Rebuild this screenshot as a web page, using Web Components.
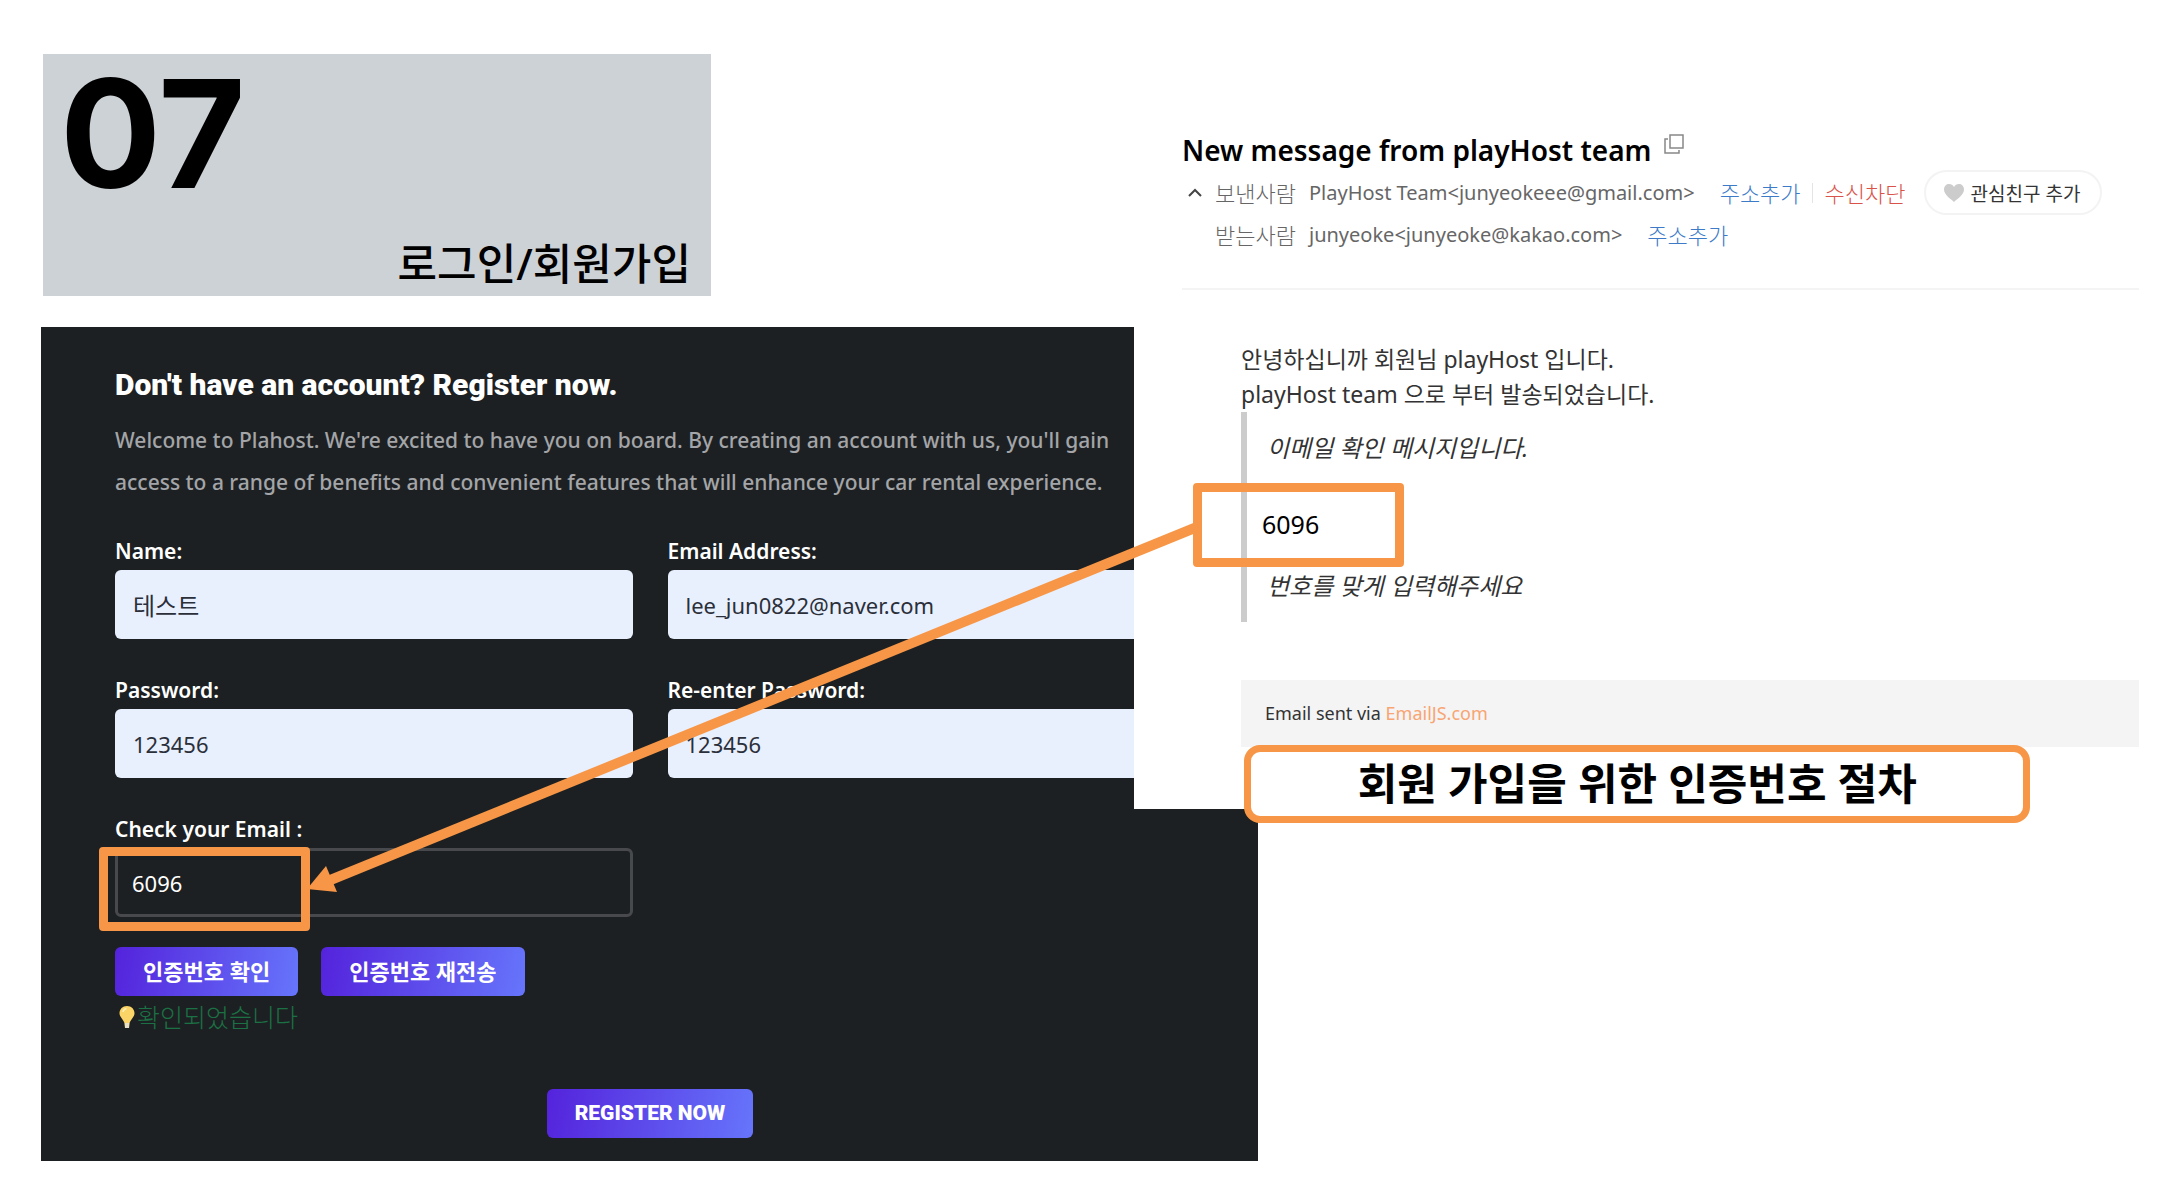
<!DOCTYPE html>
<html lang="ko">
<head>
<meta charset="utf-8">
<title>07 로그인/회원가입</title>
<style>
body {
  margin: 0;
  background: #fff;
  font-family: "Noto Sans", "Noto Sans CJK KR", sans-serif;
}
</style>
</head>
<body>
<slide-page>
  <slide-title slot="title" number="07">로그인/회원가입</slide-title>
  <register-form slot="form"></register-form>
  <mail-message slot="mail" subject="New message from playHost team"></mail-message>
  <slide-caption slot="caption">회원 가입을 위한 인증번호 절차</slide-caption>
</slide-page>

<script>
function define(name, html, setup) {
  const template = document.createElement('template');
  template.innerHTML = html;

  window.customElements.define(name, class extends HTMLElement {
    constructor() {
      super();
      this.attachShadow({ mode: 'open' });
      this.shadowRoot.appendChild(template.content.cloneNode(true));
    }

    connectedCallback() {
      if (setup) setup(this, this.shadowRoot);
    }
  });
}

define('slide-page', `
<style>
:host {
  display: block;
}
main {
  position: relative;
  display: grid;
  grid-template-columns: 1093fr 124fr 881fr;
  row-gap: 31px;
  padding: 54px 44px 25px 41px;
}
::slotted([slot="title"]) {
  grid-area: 1 / 1 / 2 / 2;
}
::slotted([slot="form"]) {
  grid-area: 2 / 1 / 3 / 3;
}
/* the mail lies over the right edge of the form */
::slotted([slot="mail"]) {
  grid-area: 1 / 2 / 3 / 4;
  align-self: start;
  z-index: 1;
}
::slotted([slot="caption"]) {
  position: absolute;
  z-index: 2;
  top: 745px;
  left: 57%;
  right: 7%;
}
svg {
  position: absolute;
  z-index: 2;
  top: 520px;
  left: 14%;
  width: 41%;
  height: 380px;
}
</style>

<main>
  <slot name="title"></slot>
  <slot name="form"></slot>
  <slot name="mail"></slot>
  <slot name="caption"></slot>
  <svg viewBox="306 520 895 380" preserveAspectRatio="none" aria-hidden="true">
    <path d="M1197 527L328 881" stroke="#f79646" stroke-width="10" fill="none"/>
    <path d="M307 889L326 866L337 892Z" fill="#f79646"/>
  </svg>
</main>
`);

define('slide-title', `
<style>
:host {
  display: flex;
  flex-direction: column;
  justify-content: space-between;
  box-sizing: border-box;
  width: 668px;
  min-height: 242px;
  margin-left: 2px;
  padding: 4px 20px 4px 17px;
  background: #cdd2d6;
  color: #000;
}
.number {
  font: 700 150px/152px Inter, sans-serif;
}
h1 {
  margin: 0;
  text-align: right;
  font-size: 43px;
  line-height: 56px;
  font-weight: 500;
}
</style>
<div class="number"></div>
<h1><slot></slot></h1>
`, (el, root) => {
  root.querySelector('.number').innerText = el.getAttribute('number');
});

define('slide-caption', `
<style>
:host {
  box-sizing: border-box;
  display: block;
  height: 78px;
  border: 7px solid #f79646;
  border-radius: 16px;
  background: #fff;
  color: #000;
  text-align: center;
  font-size: 43px;
  line-height: 64px;
  font-weight: 700;
}
</style>
<slot></slot>
`);

define('form-field', `
<style>
:host {
  display: block;
}
label {
  display: block;
  margin-bottom: 3px;
  color: #fff;
  font-size: 21px;
  line-height: 32px;
  font-weight: 600;
}
.box {
  position: relative;
}
input {
  display: block;
  box-sizing: border-box;
  width: 100%;
  height: 69px;
  padding: 0 18px;
  border: 0;
  border-radius: 6px;
  outline: none;
  background: #e8f0fe;
  color: #2b2f3a;
  font-family: inherit;
  font-size: 22px;
}
input:lang(ko) {
  font-size: 24px;
}
:host([outlined]) input {
  padding: 0 14px;
  border: 3px solid #48494c;
  background: transparent;
  color: #fff;
}
:host([outlined]) .box::after {
  content: '';
  position: absolute;
  box-sizing: border-box;
  top: -1px;
  left: -16px;
  width: 211px;
  height: 84px;
  border: 9px solid #f79646;
  border-radius: 4px;
}
</style>
<label for="field"></label>
<div class="box"><input id="field" type="text"></div>
`, (el, root) => {
  root.querySelector('label').innerText = el.getAttribute('label');
  const input = root.querySelector('input');
  input.value = el.getAttribute('value');
  input.lang = /[가-힣]/.test(input.value) ? 'ko' : 'en';
});

define('gradient-button', `
<style>
:host {
  display: block;
}
button {
  display: block;
  height: 49px;
  padding: 0 28px 4px;
  border: 0;
  border-radius: 6px;
  background: linear-gradient(100deg, #5423dc, #6675fb);
  color: #fff;
  font-family: inherit;
  font-size: 22px;
  font-weight: 700;
}
:host([latin]) button {
  padding: 0 28px 2px;
  font-family: Roboto, sans-serif;
  font-size: 21px;
  font-weight: 900;
}
</style>
<button type="button"><slot></slot></button>
`);

define('register-form', `
<style>
:host {
  display: block;
  box-sizing: border-box;
  padding: 39px 73px 23px 74px;
  background: #1d2022;
}
h2 {
  margin: 0 0 16px;
  color: #fff;
  font: 900 30px/37px Roboto, sans-serif;
}
p {
  margin: 0;
}
.intro {
  margin-bottom: 32px;
  color: #a3a5a8;
  font-size: 21px;
  line-height: 42px;
  font-weight: 500;
  white-space: nowrap;
}
.fields {
  display: grid;
  grid-template-columns: 1fr 1fr;
  gap: 35px;
}
.actions {
  display: flex;
  gap: 23px;
  margin-top: 30px;
}
.status {
  display: flex;
  align-items: center;
  gap: 2px;
  padding-left: 4px;
  color: #1b7145;
  font-size: 25px;
  line-height: 42px;
  font-weight: 300;
}
.submit {
  display: flex;
  justify-content: center;
  margin-top: 51px;
}
</style>
<h2>Don't have an account? Register now.</h2>
<p class="intro">Welcome to Plahost. We're excited to have you on board. By creating an account with us, you'll gain<br>access to a range of benefits and convenient features that will enhance your car rental experience.</p>
<form>
  <div class="fields">
    <form-field label="Name:" value="테스트"></form-field>
    <form-field label="Email Address:" value="lee_jun0822@naver.com"></form-field>
    <form-field label="Password:" value="123456"></form-field>
    <form-field label="Re-enter Password:" value="123456"></form-field>
    <form-field label="Check your Email :" value="6096" outlined></form-field>
  </div>
  <div class="actions">
    <gradient-button>인증번호 확인</gradient-button>
    <gradient-button>인증번호 재전송</gradient-button>
  </div>
  <p class="status">
    <svg width="16" height="24" viewBox="0 0 16 24" aria-hidden="true">
      <path d="M8 1C3.600 1 .5 4.200 .5 8.300C.5 12 4 14 5.500 18L6 23H10L10.500 18C12 14 15.500 12 15.500 8.300C15.500 4.200 12.400 1 8 1Z" fill="#fbd468"/>
      <path d="M5.800 18H10.200L10 23H6Z" fill="#e6e0cb"/>
      <path d="M4 7Q4.500 4 7.500 3.500" stroke="#fff0b5" stroke-width="1.500" fill="none"/>
    </svg>
    <span>확인되었습니다</span>
  </p>
  <div class="submit"><gradient-button latin>REGISTER NOW</gradient-button></div>
</form>
`);

define('mail-address', `
<style>
:host {
  display: flex;
  align-items: center;
  min-height: 40px;
  padding-left: 33px;
  color: #666;
  font-size: 20px;
  line-height: 40px;
  white-space: nowrap;
}
:host([first]) {
  min-height: 45px;
  padding-left: 6px;
}
button {
  display: none;
  width: 27px;
  height: 40px;
  padding: 0;
  border: 0;
  background: none;
  text-align: left;
}
:host([first]) button {
  display: block;
}
.role {
  margin-right: 13px;
  font-size: 22px;
  font-weight: 300;
}
.address {
  margin-right: 25px;
}
</style>
<button type="button" aria-label="접기">
  <svg width="14" height="9" viewBox="0 0 14 9"><path d="M1 8L7 2L13 8" stroke="#444" stroke-width="2" fill="none"/></svg>
</button>
<span class="role"></span>
<span class="address"></span>
<slot></slot>
`, (el, root) => {
  root.querySelector('.role').innerText = el.getAttribute('role-name');
  root.querySelector('.address').innerText = el.getAttribute('address');
});

define('mail-message', `
<style>
:host {
  display: block;
  box-sizing: border-box;
  padding: 76px 0 62px 48px;
  background: #fff;
  color: #333;
}
header {
  padding-bottom: 33px;
  border-bottom: 2px solid #f4f4f4;
}
h2 {
  display: flex;
  gap: 13px;
  margin: 0;
  color: #000;
  font-size: 28px;
  line-height: 40px;
  font-weight: 600;
}
h2 svg {
  margin-top: 4px;
}
a {
  color: #3d7bc8;
  font-size: 22px;
  font-weight: 300;
  text-decoration: none;
}
a.block {
  margin-left: 11px;
  padding-left: 12px;
  color: #d9534a;
  line-height: 20px;
  border-left: 1px solid #e4e4e4;
}
.friend {
  display: flex;
  align-items: center;
  gap: 7px;
  height: 45px;
  margin-left: 18px;
  padding: 0 20px 0 18px;
  border: 2px solid #f3f3f3;
  border-radius: 23px;
  background: #fff;
  color: #333;
  font-family: inherit;
  font-size: 19px;
}
.body {
  margin: 52px 0 0 59px;
  font-size: 23px;
  line-height: 35px;
}
p {
  margin: 0;
}
blockquote {
  margin: 0;
  padding: 18px 0 19px 15px;
  border-left: 6px solid #ccc;
  font-size: 24px;
}
blockquote p {
  padding-left: 5px;
}
.code {
  position: relative;
  margin: 42px 0 26px;
  padding: 0;
  color: #000;
  font-size: 25px;
}
.code::before {
  content: '';
  position: absolute;
  box-sizing: border-box;
  top: -24px;
  left: -69px;
  width: 211px;
  height: 84px;
  border: 9px solid #f79646;
  border-radius: 4px;
}
footer {
  margin-top: 58px;
  padding: 0 24px;
  background: #f4f4f4;
  font-size: 18px;
  line-height: 67px;
}
footer a {
  color: #f8a573;
  font-size: 18px;
  font-weight: 400;
}
</style>
<header>
  <h2>
    <span id="subject"></span>
    <svg width="20" height="20" viewBox="0 0 20 20" fill="none" stroke="#888" stroke-width="1.500" aria-hidden="true">
      <path d="M6 1H19V14H6Z"/>
      <path d="M4 5H1V19H15V16"/>
    </svg>
  </h2>
  <mail-address first role-name="보낸사람" address="PlayHost Team<junyeokeee@gmail.com>">
    <a href="#">주소추가</a>
    <a class="block" href="#">수신차단</a>
    <button class="friend" type="button">
      <svg width="20" height="18" viewBox="0 0 20 18" aria-hidden="true"><path d="M10 18C7 15 0 11 0 5.500C0 2 2.500 0 5 0C7.300 0 9 1.200 10 3C11 1.200 12.700 0 15 0C17.500 0 20 2 20 5.500C20 11 13 15 10 18Z" fill="#ccc"/></svg>
      관심친구 추가
    </button>
  </mail-address>
  <mail-address role-name="받는사람" address="junyeoke<junyeoke@kakao.com>">
    <a href="#">주소추가</a>
  </mail-address>
</header>
<div class="body">
  <p>안녕하십니까 회원님 playHost 입니다.</p>
  <p>playHost team 으로 부터 발송되었습니다.</p>
  <blockquote>
    <p><em>이메일 확인 메시지입니다.</em></p>
    <p class="code">6096</p>
    <p><em>번호를 맞게 입력해주세요</em></p>
  </blockquote>
  <footer>Email sent via <a href="#">EmailJS.com</a></footer>
</div>
`, (el, root) => {
  root.querySelector('#subject').innerText = el.getAttribute('subject');
});
</script>
</body>
</html>
